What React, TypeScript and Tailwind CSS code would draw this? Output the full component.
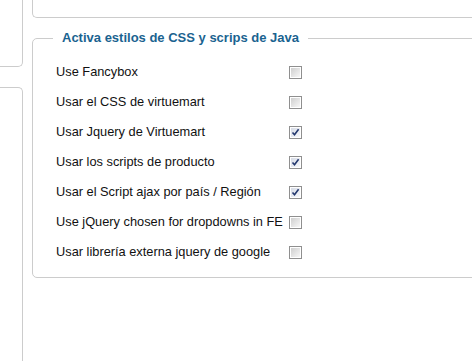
import React from "react";

const rows: { label: string; checked: boolean }[] = [
  { label: "Use Fancybox", checked: false },
  { label: "Usar el CSS de virtuemart", checked: false },
  { label: "Usar Jquery de Virtuemart", checked: true },
  { label: "Usar los scripts de producto", checked: true },
  { label: "Usar el Script ajax por país / Región", checked: true },
  { label: "Use jQuery chosen for dropdowns in FE", checked: false },
  { label: "Usar librería externa jquery de google", checked: false },
];

function Check({ checked }: { checked: boolean }) {
  return (
    <div className="w-[13px] h-[13px] shrink-0 border border-[#8f8f8f] bg-white p-[1px]">
      <div
        className={
          checked
            ? "relative w-full h-full bg-gradient-to-br from-[#d6dbe6] to-[#f7f8fb]"
            : "w-full h-full bg-gradient-to-br from-[#cfcfcf] to-[#f7f7f7]"
        }
      >
        {checked && (
          <svg viewBox="0 0 9 9" className="absolute inset-0 w-[9px] h-[9px]">
            <path d="M1.5 4.5 L3.5 6.8 L7.6 1.2" fill="none" stroke="#23386e" strokeWidth="1.6" />
          </svg>
        )}
      </div>
    </div>
  );
}

export default function App() {
  return (
    <div className="w-[472px] h-[361px] overflow-hidden bg-white flex font-['Liberation_Sans',Arial,sans-serif]">
      <div className="w-[23px] shrink-0 flex flex-col">
        <div className="h-[67px] border-r border-b border-[#cccccc] rounded-br-[5px]" />
        <div className="mt-[20px] flex-1 border-r border-t border-[#cccccc] rounded-tr-[5px]" />
      </div>
      <div className="ml-[9px] w-[460px] shrink-0 flex flex-col">
        <div className="h-[18px] border-l border-b border-[#cccccc] rounded-bl-[5px]" />
        <div className="relative mt-[20px] h-[240px] border border-[#cccccc] rounded-[5px] pt-[18px] pl-[23px]">
          <span className="absolute top-[-9px] left-[20px] bg-white px-[9px] text-[13px] leading-[16px] font-bold text-[#1a6390]">
            Activa estilos de CSS y scrips de Java
          </span>
          <div className="flex flex-col">
            {rows.map((r) => (
              <div key={r.label} className="h-[30px] flex items-center">
                <span className="w-[233px] shrink-0 whitespace-nowrap text-[12.8px] leading-[16px] text-[#111111]">
                  {r.label}
                </span>
                <Check checked={r.checked} />
              </div>
            ))}
          </div>
        </div>
      </div>
    </div>
  );
}
